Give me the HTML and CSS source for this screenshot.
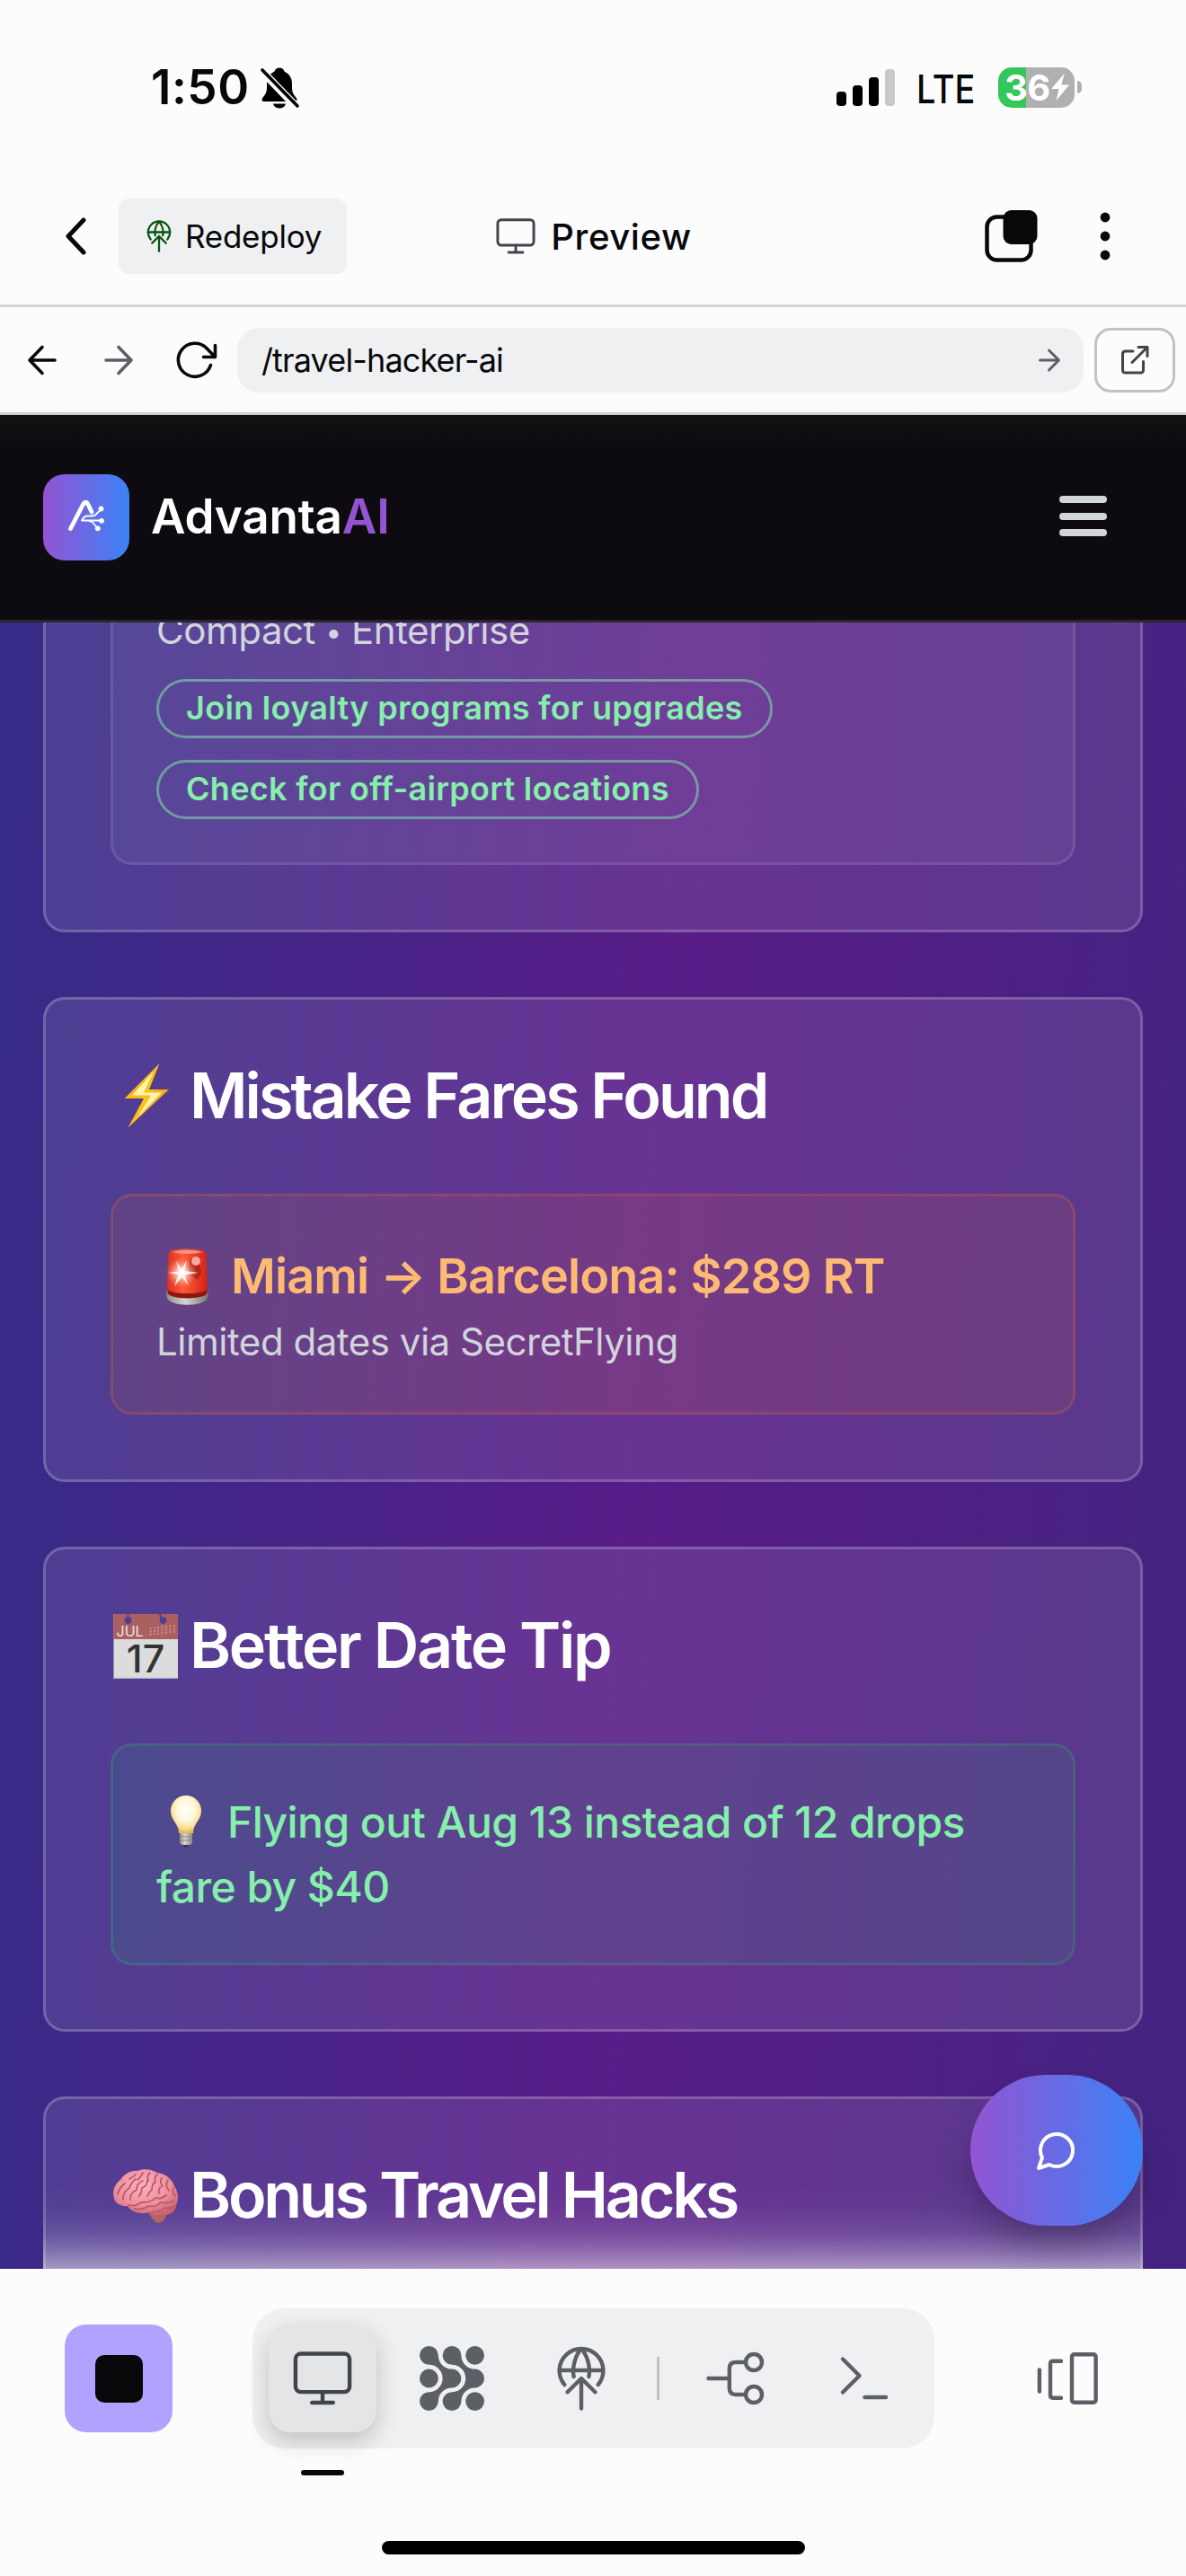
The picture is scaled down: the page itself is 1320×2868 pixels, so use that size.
FILE: index.html
```html
<!DOCTYPE html>
<html lang="en">
<head>
<meta charset="utf-8">
<title>Preview</title>
<link rel="stylesheet" href="styles.css">
</head>
<body>
<svg class="defs" width="0" height="0" aria-hidden="true">
  <symbol id="i-globe" viewBox="0 0 72 72">
    <path d="M17.3 43A24.4 24.4 0 1 1 54.7 43M11.6 27H60.4M27.6 34C25.6 24 29 11 36 2.8C43 11 46.4 24 44.4 34M36 69.5V36M20.6 51.3L36 36L51.4 51.3"/>
  </symbol>
  <symbol id="i-monitor" viewBox="0 0 72 72">
    <rect x="5.9" y="8.5" width="60.2" height="42.6" rx="6"/><path d="M36 51V63M24.2 63H47.8"/>
  </symbol>
</svg>

<div class="status">
  <div class="status-left">
    <span class="clock">1:50</span>
    <svg class="bell" width="44" height="48" viewBox="0 0 44 48">
      <path d="M22 1.500c-3 0-5 1.800-5.600 4.300C11 8 8 13 8 19v5c0 4-1.500 7-4 10-2.500 3-1.500 5 1 5h34c2.500 0 3.500-2 1-5-2.500-3-4-6-4-10v-5c0-6-3-11-8.400-13.200C27 3.300 25 1.500 22 1.500z"/>
      <path d="M15 41.500h14c-.8 3.200-3.600 5-7 5s-6.200-1.800-7-5z"/>
      <path class="bell-gap" d="M1 3.500L41 45"/><path class="bell-slash" d="M3 4L42 44"/>
    </svg>
  </div>
  <div class="status-right">
    <div class="signal"><i class="b1"></i><i class="b2"></i><i class="b3"></i><i class="b4"></i></div>
    <span class="lte">LTE</span>
    <div class="battery"><div class="cell"><span>36</span><svg width="22" height="30" viewBox="0 0 22 30"><path d="M15.500 0L1 17h8.500L6.500 30L21 12.500h-8.500z"/></svg></div><div class="nub"></div></div>
  </div>
</div>

<div class="nav">
  <div class="nav-left">
    <svg class="ln back" width="24" height="44" viewBox="0 0 24 44"><path d="M21 4L4 22L21 40"/></svg>
    <div class="redeploy"><svg class="ln green" width="36" height="36"><use href="#i-globe"/></svg><span>Redeploy</span></div>
  </div>
  <div class="nav-title"><svg class="ln slate" width="48" height="48"><use href="#i-monitor"/></svg><span>Preview</span></div>
  <div class="nav-right">
    <svg width="60" height="60" viewBox="0 0 60 60"><rect class="copy-out" x="4.500" y="8.500" width="49" height="48" rx="11"/><rect class="copy-in" x="22.500" y="1" width="38" height="38" rx="9"/></svg>
    <svg class="dots" width="12" height="56" viewBox="0 0 12 56"><circle cx="6" cy="7" r="5.400"/><circle cx="6" cy="28" r="5.400"/><circle cx="6" cy="49" r="5.400"/></svg>
  </div>
</div>

<div class="urlbar">
  <svg class="ln ink" width="32" height="36" viewBox="0 0 32 36"><path d="M30 18H2M16 3.500L2 18L16 32.500"/></svg>
  <svg class="ln gray fwd" width="32" height="36" viewBox="0 0 32 36"><path d="M2 18H30M16 3.500L30 18L16 32.500"/></svg>
  <svg class="ln ink reload" width="48" height="44" viewBox="0 0 48 44"><path d="M39.500 27.500A18.500 18.500 0 1 1 35 8.700L44.500 18.500M44.500 5.500V18.500H31.500"/></svg>
  <div class="input"><span>/travel-hacker-ai</span><svg class="ln gray thin" width="24" height="26" viewBox="0 0 24 26"><path d="M1.500 13H22.500M11.500 2L22.500 13L11.500 24"/></svg></div>
  <div class="open"><svg class="ln slate thin" width="34" height="34" viewBox="0 0 34 34"><path d="M15 7H6.500Q3.500 7 3.500 10V28Q3.500 31 6.500 31H23.500Q26.500 31 26.500 28V18.500M14 19.500L31 2.500M21 2.500H31V12.500"/></svg></div>
</div>

<header class="site">
  <div class="brand">
    <div class="mark"><svg width="60" height="60" viewBox="0 0 60 60">
      <path class="leg" d="M18.500 42.500L32.500 15.500Q35.500 11 38 15.500L42 24"/>
      <path class="wire" d="M31 33.500Q33.500 28.500 37 28.500H43Q45 28.500 46.500 27L52 21.500M31 33.500H53M39 34Q42 34 43.500 36L48.500 42"/>
      <circle cx="52.500" cy="20.500" r="2.900"/><circle cx="53" cy="33.800" r="2.900"/><circle cx="48.800" cy="42.300" r="2.900"/></svg></div>
    <span class="name">Advanta<b>AI</b></span>
  </div>
  <div class="burger"><i></i><i></i><i></i></div>
</header>

<main class="view">
  <div class="cards">
    <section class="card first">
      <div class="box plain">
        <p class="sub">Compact <span class="dot">•</span> Enterprise</p>
        <div class="chips"><span class="chip">Join loyalty programs for upgrades</span><span class="chip">Check for off-airport locations</span></div>
      </div>
    </section>

    <section class="card">
      <h2><svg width="78" height="72" viewBox="0 0 78 72">
        <defs><linearGradient id="bolt" x1="0" y1="0" x2="1" y2="1"><stop offset="0" stop-color="#f7a30a"/><stop offset=".5" stop-color="#ffc21a"/><stop offset="1" stop-color="#f08a00"/></linearGradient></defs>
        <path fill="url(#bolt)" d="M52.500-1L13.500 38H35L17.500 70.500L63 28H41z"/><path fill="#fff6b0" d="M46 8L22 34.500H43L28 59L55 31.500H35z"/></svg><span>Mistake Fares Found</span></h2>
      <div class="box orange">
        <p class="lead"><svg width="68" height="66" viewBox="0 0 68 66">
          <defs><linearGradient id="lamp" x1="0" x2="1"><stop offset="0" stop-color="#d8301f"/><stop offset=".4" stop-color="#ff5a3c"/><stop offset="1" stop-color="#cf2414"/></linearGradient>
          <linearGradient id="base" x1="0" x2="1"><stop offset="0" stop-color="#8d8f8a"/><stop offset=".45" stop-color="#d5d5cf"/><stop offset="1" stop-color="#77776f"/></linearGradient>
          <radialGradient id="glow"><stop offset="0" stop-color="#fff"/><stop offset=".35" stop-color="#ffd5cb" stop-opacity=".8"/><stop offset="1" stop-color="#ff8c78" stop-opacity="0"/></radialGradient></defs>
          <path fill="url(#base)" d="M11.500 48H57.500V54C57.500 67 11.500 67 11.500 54z"/>
          <path fill="#8f160c" d="M12.500 44H56.500V50C56.500 58.500 12.500 58.500 12.500 50z"/>
          <path fill="url(#lamp)" d="M13.500 8Q14 3 19 2.500Q34.500 .5 50 2.500Q55 3 55.500 8L57 45C57 53 12 53 12 45z"/>
          <path fill="#f79483" d="M17 5Q34.500 .5 52 5Q34.500 9 17 5z"/>
          <path fill="#9c1c12" opacity=".7" d="M38 13Q47 12 49 22Q52 30 45 35L34 30z"/>
          <circle cx="44" cy="15" r="5" fill="#f3a9a3"/>
          <circle cx="28" cy="28" r="17" fill="url(#glow)"/>
          <path fill="#fff" d="M13 28L25 26.500L22 15L28 24L34 14L31.500 26L47 28L31.500 30.500L36 43L28.500 32.500L20 43L24.500 30z" opacity=".85"/></svg><span>Miami → Barcelona: $289 RT</span></p>
        <p class="sub">Limited dates via SecretFlying</p>
      </div>
    </section>

    <section class="card">
      <h2 class="date"><svg width="78" height="72" viewBox="0 0 78 72">
        <rect x="1.500" y="0" width="71.500" height="72" fill="#dcdcdc"/><rect x="1.500" y="0" width="71.500" height="28" fill="#ab605f"/><rect x="1.500" y="70.800" width="71.500" height="1.200" fill="#b9b4c4"/>
        <g fill="#4f4095"><circle cx="17.500" cy="7" r="4"/><circle cx="56.500" cy="7" r="4"/><path d="M16.500 0h1.800v5h-1.800zM52 0h1.800l2 6h-2z"/></g>
        <text x="4.500" y="24.500" class="cal-m">JUL</text>
        <g stroke="#cf9c9a" stroke-width="1.600" stroke-dasharray="2 1.400"><path d="M42.500 15V24M47 14.500V24M51 14V24M55.500 13V24M60 13V22M64.500 12.500V22M69 12V22"/></g>
        <text x="37" y="64.500" class="cal-d">17</text></svg><span>Better Date Tip</span></h2>
      <div class="box greenbox">
        <p class="tip"><svg width="66" height="62" viewBox="0 0 66 62">
          <defs><radialGradient id="bulb" cx=".5" cy=".38" r=".6"><stop offset="0" stop-color="#fff"/><stop offset=".5" stop-color="#fff8dd"/><stop offset=".85" stop-color="#f9dc8a"/><stop offset="1" stop-color="#e9b950"/></radialGradient>
          <linearGradient id="cap" x1="0" x2="1"><stop offset="0" stop-color="#8f8c86"/><stop offset=".4" stop-color="#dcd8cf"/><stop offset="1" stop-color="#8d8a84"/></linearGradient></defs>
          <path fill="#3b3640" d="M28 55H38L35 59.500H31z"/><path fill="url(#cap)" d="M26 43H40V53Q40 57 36 57H30Q26 57 26 53z"/>
          <path stroke="#8a867e" stroke-width="1" d="M26 48H40M26 52H40"/>
          <path fill="url(#bulb)" d="M33 2A17 17 0 0 1 50 19C50 30 41 33 41 44H25C25 33 16 30 16 19A17 17 0 0 1 33 2z"/></svg>Flying out Aug 13 instead of 12 drops<br>fare by $40</p>
      </div>
    </section>

    <section class="card last">
      <h2 class="hacks"><svg width="78" height="72" viewBox="0 0 78 72">
        <defs><radialGradient id="brain" cx=".45" cy=".35" r=".7"><stop offset="0" stop-color="#fbb3bd"/><stop offset=".6" stop-color="#ee8f9d"/><stop offset="1" stop-color="#c9606f"/></radialGradient></defs>
        <path fill="#b4635f" d="M44 50Q54 46 61 50C60 60 58 65 52 66C46 66 45 60 40 55z"/>
        <path fill="url(#brain)" d="M1.500 37C0 30 3 22 9 18C13 11 22 7 28 8C34 5 44 6 50 10C60 11 67 18 69 25C74 31 74 42 71 46C71 52 66 57 59 57C52 59 45 57 42 54C32 57 21 54 17 47C10 48 2 44 1.500 37z"/>
        <g fill="none" stroke="#b9566a" stroke-width="1.700" stroke-linecap="round"><path d="M6 34Q8 26 14 22M12 40Q11 32 19 27Q21 21 26 17M20 40Q20 32 27 29Q27 22 34 19M26 12Q23 15 19 17M34 10Q31 16 28 18M30 36Q33 32 33 27Q39 25 39 18M42 10Q38 13 40 19M39 36Q41 31 44 29Q44 22 48 20M50 12Q46 15 48 21M55 16Q52 20 56 25M62 18Q58 24 63 30M68 27Q66 32 70 36M18 46Q26 48 32 43Q42 44 48 38Q54 40 60 35M24 50Q34 52 40 47Q48 49 54 43Q62 45 68 41M44 54Q54 54 58 49Q64 51 69 47M52 33Q51 27 54 26"/></g></svg><span>Bonus Travel Hacks</span></h2>
    </section>
  </div>
  <div class="fab"><svg width="48" height="48" viewBox="0 0 24 24"><path d="M7.900 20A9 9 0 1 0 4 16.100L2 22Z"/></svg></div>
</main>

<footer class="dock">
  <div class="dock-row">
    <div class="stop"><i></i></div>
    <div class="pill">
      <div class="slot active"><svg class="ln slate d" width="72" height="72"><use href="#i-monitor"/></svg><i class="mark-line"></i></div>
      <div class="slot"><svg class="solid" width="72" height="72" viewBox="0 0 72 72">
        <path id="blob" d="M10.400 0A10.400 10.400 0 0 1 20.800 10.400A15.200 15.200 0 0 0 36 25.600A10.400 10.400 0 0 1 36 46.400A15.200 15.200 0 0 0 20.800 61.600A10.400 10.400 0 1 1 10.400 51.200A15.200 15.200 0 0 0 10.400 20.800A10.400 10.400 0 0 1 10.400 0Z"/><use href="#blob" x="25.600"/>
        <circle cx="10.400" cy="36" r="10.400"/><circle cx="61.600" cy="10.400" r="10.400"/><circle cx="61.600" cy="61.600" r="10.400"/></svg></div>
      <div class="slot"><svg class="ln gray d" width="72" height="72"><use href="#i-globe"/></svg></div>
      <div class="sep"></div>
      <div class="slot"><svg class="ln gray d" width="72" height="72" viewBox="0 0 72 72"><path d="M6.500 36H29M48 18H37Q29.800 18 29.800 25V47Q29.800 54 37 54H48"/><circle cx="57" cy="18" r="9"/><circle cx="57" cy="54" r="9"/></svg></div>
      <div class="slot"><svg class="ln gray d" width="72" height="72" viewBox="0 0 72 72"><path d="M12 14.500L30.500 33L12 51.500M36.500 57H60"/></svg></div>
    </div>
    <div class="slot"><svg class="ln gray d" width="72" height="72" viewBox="0 0 72 72"><path d="M4.900 26.500V50.500M29 16.700H20Q17 16.700 17 19.700V54.700Q17 57.700 20 57.700H29"/><rect x="41" y="9.300" width="26.600" height="53.400" rx="2.500"/></svg></div>
  </div>
  <div class="home"></div>
</footer>
</body>
</html>
```
FILE: styles.css
```css
* { box-sizing: border-box; }
body { margin: 0; width: 1320px; height: 2868px; overflow: hidden; display: flex; flex-direction: column; background: #fcfcfc; color: #07080a; font-family: Inter, "Liberation Sans", sans-serif; }
svg { display: block; flex: none; overflow: visible; }
p, h2 { margin: 0; }
i, b { font-style: normal; font-weight: inherit; }
.defs { position: absolute; }

/* line icons */
.ln { fill: none; stroke-width: 3.600; stroke-linecap: round; stroke-linejoin: round; }
.ln.thin { stroke-width: 3; }
.ink { stroke: #07080a; }
.gray { stroke: #5c5f66; }
.slate { stroke: #41444c; }
.green { stroke: #0a5312; stroke-width: 4.600; }
.ln.d, .nav-title .ln { stroke-width: 4.400; }
.solid { fill: #5c5f66; }

/* phone status bar */
.status { height: 187px; flex: none; display: flex; justify-content: space-between; align-items: flex-start; padding: 66px 116px 0 168px; }
.status-left, .status-right { display: flex; align-items: center; height: 62px; }
.clock { font-size: 53px; font-weight: 600; width: 121px; letter-spacing: .5px; white-space: nowrap; }
.bell { fill: #000; margin-top: 2px; }
.bell-gap { stroke: #fcfcfc; stroke-width: 9; }
.bell-slash { stroke: #000; stroke-width: 3.600; stroke-linecap: round; }
.signal { display: flex; align-items: flex-end; gap: 7px; height: 41px; }
.signal i { width: 11px; border-radius: 4px; background: #000; }
.signal .b1 { height: 16px; }
.signal .b2 { height: 23px; }
.signal .b3 { height: 32px; }
.signal .b4 { height: 41px; background: #c9c9c9; }
.lte { font-size: 44px; font-weight: 500; margin: 4px 0 0 24px; width: 91px; transform: scaleX(.86); transform-origin: left; }
.battery { display: flex; align-items: center; gap: 3px; }
.cell { width: 85px; height: 45px; border-radius: 15px; background: linear-gradient(90deg, #34c759 31px, #b0b0b0 31px); display: flex; align-items: center; padding-left: 7px; color: #fff; font-size: 40px; font-weight: 700; letter-spacing: -.5px; }
.cell svg { fill: #fff; }
.nub { width: 5px; height: 14px; border-radius: 0 5px 5px 0; background: #b0b0b0; }

/* app navigation */
.nav { height: 155px; flex: none; display: grid; grid-template-columns: 1fr auto 1fr; align-items: center; padding: 0 72px; border-bottom: 3px solid #d4d4d4; }
.nav-left { display: flex; align-items: center; gap: 36px; }
.back { stroke: #07080a; stroke-width: 5; }
.redeploy { width: 254px; height: 84px; border-radius: 12px; background: #eff0f2; display: flex; align-items: center; padding-left: 27px; gap: 11px; font-size: 35px; letter-spacing: -.25px; }
.nav-title { display: flex; align-items: center; gap: 15px; font-size: 40px; font-weight: 500; letter-spacing: .6px; }
.nav-right { display: flex; justify-content: flex-end; align-items: center; gap: 70px; padding-right: 12px; }
.copy-out { fill: none; stroke: #07080a; stroke-width: 4.500; }
.copy-in, .dots { fill: #07080a; }

/* address bar */
.urlbar { height: 120px; flex: none; display: flex; align-items: center; padding: 0 12px 0 31px; border-bottom: 3px solid #d0d0d0; }
.fwd { margin-left: 53px; }
.reload { margin-left: 47px; }
.input { width: 942px; height: 72px; margin-left: 21px; border-radius: 24px; background: #eff0f2; display: flex; align-items: center; justify-content: space-between; padding: 0 26px 0 27px; font-size: 36px; letter-spacing: -.85px; }
.open { width: 90px; height: 72px; margin-left: 12px; border: 3px solid #c0c3c3; border-radius: 18px; display: grid; place-items: center; }

/* website header */
.site { height: 231px; flex: none; background: linear-gradient(#111113, #0d0b10 38px); border-bottom: 3px solid #28262a; display: flex; align-items: center; justify-content: space-between; padding: 0 88px 0 48px; }
.brand { display: flex; align-items: center; gap: 24px; }
.mark { width: 96px; height: 96px; border-radius: 24px; background: linear-gradient(90deg, #9354d2, #3b82f6); }
.mark svg { margin: 18px 0 0 12px; fill: #fff; }
.leg, .wire { fill: none; stroke: #fff; stroke-linecap: round; stroke-linejoin: round; }
.leg { stroke-width: 4.800; }
.wire { stroke-width: 1.800; }
.name { margin-top: -3px; font-size: 53px; font-weight: 600; letter-spacing: -.2px; color: #fff; }
.name b { color: #9354d2; }
.burger { width: 53px; display: flex; flex-direction: column; gap: 10.500px; margin-top: -3px; }
.burger i { height: 8px; border-radius: 4px; background: #d1d5db; }

/* page body */
.view { height: 1833px; flex: none; position: relative; overflow: hidden; background: linear-gradient(94deg, #312e87 -6.500%, #581c87 53.700%, #312a7a 140%); }
.cards { display: flex; flex-direction: column; gap: 72px; padding: 0 48px; margin-top: -147px; }
.card { flex: none; height: 540px; padding: 72px; border: 3px solid rgba(255,255,255,.2); border-radius: 24px; background: rgba(255,255,255,.1); display: flex; flex-direction: column; gap: 72px; }
.card.first { height: 492px; }
.card.last { background: linear-gradient(rgba(255,255,255,.1) 95px, rgba(255,255,255,.12) 125px, rgba(255,255,255,.2) 152px, rgba(255,255,255,.34) 172px, rgba(255,255,255,.53) 192px) border-box; }
h2 { height: 72px; line-height: 69px; display: flex; align-items: center; gap: 8px; padding-left: 2px; color: #fff; font-size: 70px; font-weight: 600; letter-spacing: -2.950px; white-space: nowrap; }
h2 span { margin-top: -3px; }
h2.date { letter-spacing: -2.300px; }
h2.hacks { letter-spacing: -3.250px; }
h2 text { letter-spacing: 0; }
.cal-m { fill: #f0e6e6; font-size: 16px; font-weight: 400; }
.cal-d { fill: #333; font-size: 43px; text-anchor: middle; font-weight: 500; }
.box { flex: 1; padding: 48px; border: 3px solid; border-radius: 24px; white-space: nowrap; }
.plain { background: rgba(255,255,255,.05); border-color: rgba(255,255,255,.1); }
.orange { background: rgba(249,115,22,.1); border-color: rgba(249,115,22,.2); }
.greenbox { background: rgba(34,197,94,.1); border-color: rgba(34,197,94,.2); }
.sub { height: 60px; line-height: 60px; font-size: 42px; letter-spacing: -.470px; color: #d1d5db; }
.dot { font-size: 32px; vertical-align: 2px; line-height: 1; }
.chips { display: flex; flex-direction: column; align-items: flex-start; gap: 24px; margin-top: 24px; }
.chip { height: 66px; line-height: 58px; padding: 0 30px; border: 3px solid rgba(134,239,172,.5); border-radius: 33px; font-size: 36px; font-weight: 600; letter-spacing: .310px; color: #86efac; }
.lead { height: 84px; display: flex; align-items: center; gap: 15px; font-size: 54px; font-weight: 600; letter-spacing: -.900px; color: #fdba74; }
.lead span { margin-top: -3px; }
.tip { padding-top: 1px; line-height: 72px; font-size: 48px; font-weight: 500; letter-spacing: -.580px; color: #86efac; }
.tip svg { display: inline-block; vertical-align: -13px; margin-right: 13px; }
.fab { position: absolute; right: 48px; bottom: 48px; width: 192px; height: 168px; border-radius: 84px; background: linear-gradient(90deg, #9354d2, #3b82f6); display: grid; place-items: center; box-shadow: 0 24px 40px -6px rgba(0,0,0,.26); }
.fab path { fill: none; stroke: #fff; stroke-width: 2; stroke-linecap: round; stroke-linejoin: round; }

/* bottom dock */
.dock { flex: 1; padding: 44px 72px 0; }
.dock-row { display: flex; align-items: center; justify-content: space-between; height: 156px; }
.stop { width: 120px; height: 120px; border-radius: 24px; background: #b0a2ff; display: grid; place-items: center; }
.stop i { width: 53px; height: 53px; border-radius: 10px; background: #07080a; }
.pill { display: flex; align-items: center; gap: 24px; padding: 18px; border-radius: 36px; background: #eff0f2; }
.slot { position: relative; width: 120px; height: 120px; border-radius: 24px; display: grid; place-items: center; }
.active { background: #e4e5e6; box-shadow: 0 10px 26px rgba(0,0,0,.2); }
.mark-line { position: absolute; left: 36px; top: 162px; width: 48px; height: 6px; border-radius: 3px; background: #07080a; }
.sep { width: 3px; height: 48px; background: #bfc1c4; }
.home { width: 471px; height: 15px; border-radius: 8px; margin: 103px auto 0; background: #000; }
```
